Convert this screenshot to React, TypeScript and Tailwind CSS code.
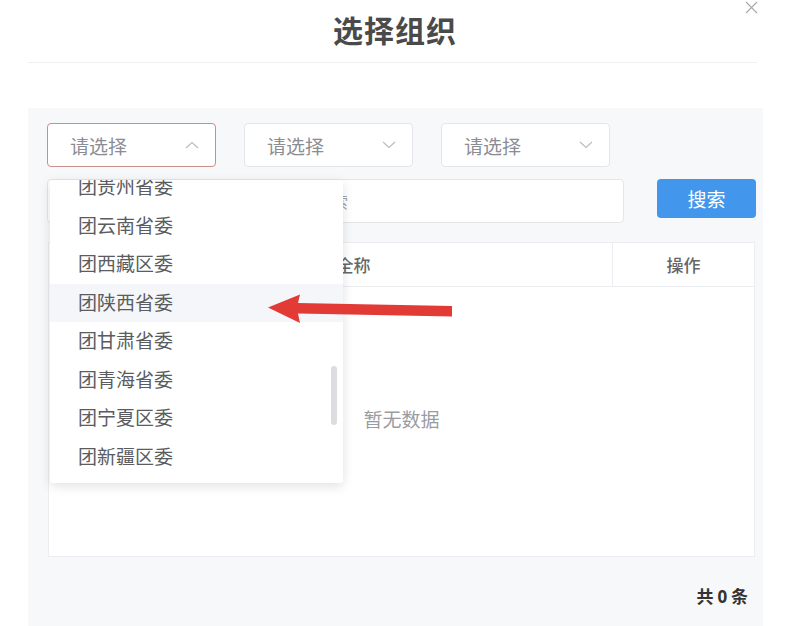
import React from "react";

const items = ["团贵州省委", "团云南省委", "团西藏区委", "团陕西省委", "团甘肃省委", "团青海省委", "团宁夏区委", "团新疆区委"];

function Chevron({ up }: { up?: boolean }) {
  return (
    <svg width="14" height="8" viewBox="0 0 14 8" fill="none" className="shrink-0">
      {up ? (
        <path d="M1 7L7 1.5L13 7" stroke="#b9bcc2" strokeWidth="1.1" />
      ) : (
        <path d="M1 1L7 6.5L13 1" stroke="#b9bcc2" strokeWidth="1.1" />
      )}
    </svg>
  );
}

function Select({ active }: { active?: boolean }) {
  return (
    <div
      className={`w-[169px] h-[44px] bg-white rounded-[4px] border flex items-center justify-between pl-[22px] pr-[16px] ${
        active ? "border-[#c98f8c]" : "border-[#e4e6ea]"
      }`}
    >
      <span className="text-[19px] text-[#8a8d93] leading-none">请选择</span>
      <Chevron up={active} />
    </div>
  );
}

export default function App() {
  return (
    <div
      className="relative w-[790px] h-[626px] bg-white overflow-hidden"
      style={{ fontFamily: '"Noto Sans CJK SC", "Noto Sans", sans-serif' }}
    >
      {/* close */}
      <div className="absolute top-[1px] left-[745px]">
        <svg width="13" height="13" viewBox="0 0 13 13">
          <path d="M1 1L12 12M12 1L1 12" stroke="#a6a8ad" strokeWidth="1.1" />
        </svg>
      </div>

      {/* header */}
      <div className="h-[62px] flex items-center justify-center pb-[4px]">
        <h1 className="text-[30px] font-bold text-[#4a4a4a] leading-none tracking-[1px]">选择组织</h1>
      </div>
      <div className="ml-[28px] mr-[33px] border-t border-[#eef0f3]" />
      <div className="h-[45px]" />

      {/* panel */}
      <div className="ml-[28px] w-[735px] h-[518px] bg-[#f7f8fa] pt-[15px] pl-[19px] flex flex-col">
        <div className="flex gap-[28px]">
          <Select active />
          <Select />
          <Select />
        </div>

        <div className="flex mt-[12px] gap-[33px] items-start">
          <div className="w-[577px] h-[44px] bg-white border border-[#e4e6ea] rounded-[4px] flex items-center pl-[44px] overflow-hidden">
            <span className="text-[16px] text-[#a0a3a8] whitespace-nowrap">请输入组织名称或组织编码进行搜索</span>
          </div>
          <button className="w-[99px] h-[39px] rounded-[4px] bg-[#4297ec] text-white text-[19px] leading-none flex items-center justify-center">
            搜索
          </button>
        </div>

        <div className="mt-[19px] ml-[1px] w-[707px] h-[315px] bg-white border border-[#ebedf1] flex flex-col">
          <div className="h-[44px] flex border-b border-[#ebedf1]">
            <div className="w-[563px] flex items-center justify-center pl-[12px] text-[17px] font-medium text-[#666]">组织全称</div>
            <div className="flex-1 border-l border-[#ebedf1] flex items-center justify-center text-[17px] font-medium text-[#666]">
              操作
            </div>
          </div>
          <div className="flex-1 flex items-center justify-center pb-[4px]">
            <span className="text-[19px] text-[#9a9ca1]">暂无数据</span>
          </div>
        </div>

        <div className="flex justify-end pr-[15px] mt-[30px]">
          <span className="text-[17px] font-bold text-[#333] leading-none">
            共 <span className="font-sans">0</span> 条
          </span>
        </div>
      </div>

      {/* dropdown */}
      <div className="absolute left-[50px] top-[180px] w-[293px] h-[303px] bg-white rounded-[3px] shadow-[0_3px_12px_rgba(0,0,0,0.12)] overflow-hidden">
        <div className="-mt-[12px]">
          {items.map((t, i) => (
            <div
              key={t}
              className={`h-[38.5px] flex items-center pl-[28px] pb-[2px] text-[19px] text-[#5a5c60] ${
                i === 3 ? "bg-[#f4f6f9]" : ""
              }`}
            >
              {t}
            </div>
          ))}
        </div>
        <div className="absolute left-[281px] top-[186px] w-[6px] h-[59px] rounded-full bg-[#dcdde0]" />
      </div>

      {/* red arrow */}
      <svg className="absolute left-[262px] top-[288px]" width="196" height="40" viewBox="0 0 196 40">
        <path d="M6 19.5L38 6.5L36 15L190 18L190 28.5L36 25.5L38 35Z" fill="#e23b35" />
      </svg>
    </div>
  );
}
